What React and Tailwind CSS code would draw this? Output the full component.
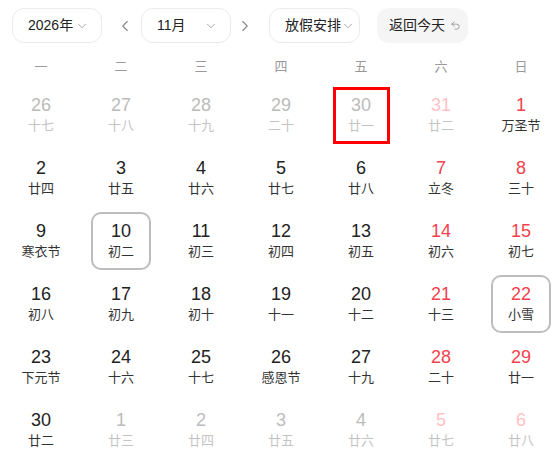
import { ChevronDown, ChevronLeft, ChevronRight, Undo2 } from 'lucide-react';

const weekdays = ['一', '二', '三', '四', '五', '六', '日'];

// kind: 'out' = other month, 'in' = this month; weekend cols get red numbers
const days = [
    ['26', '十七', 'out'], ['27', '十八', 'out'], ['28', '十九', 'out'], ['29', '二十', 'out'], ['30', '廿一', 'out', 'today'], ['31', '廿二', 'out'], ['1', '万圣节', 'in'],
    ['2', '廿四', 'in'], ['3', '廿五', 'in'], ['4', '廿六', 'in'], ['5', '廿七', 'in'], ['6', '廿八', 'in'], ['7', '立冬', 'in'], ['8', '三十', 'in'],
    ['9', '寒衣节', 'in'], ['10', '初二', 'in', 'sel'], ['11', '初三', 'in'], ['12', '初四', 'in'], ['13', '初五', 'in'], ['14', '初六', 'in'], ['15', '初七', 'in'],
    ['16', '初八', 'in'], ['17', '初九', 'in'], ['18', '初十', 'in'], ['19', '十一', 'in'], ['20', '十二', 'in'], ['21', '十三', 'in'], ['22', '小雪', 'in', 'sel'],
    ['23', '下元节', 'in'], ['24', '十六', 'in'], ['25', '十七', 'in'], ['26', '感恩节', 'in'], ['27', '十九', 'in'], ['28', '二十', 'in'], ['29', '廿一', 'in'],
    ['30', '廿二', 'in'], ['1', '廿三', 'out'], ['2', '廿四', 'out'], ['3', '廿五', 'out'], ['4', '廿六', 'out'], ['5', '廿七', 'out'], ['6', '廿八', 'out'],
];

const Select = ({ label, className }) => (
    <div className={`flex items-center justify-between h-[35px] rounded-[12px] border border-[#ebebeb] bg-white text-[14px] text-[#222] ${className}`}>
        <span>{label}</span>
        <ChevronDown size={14} strokeWidth={1.5} className="text-[#999]" />
    </div>
);

const DayCell = ({ day, index }) => {
    const [num, lunar, kind, mark] = day;
    const weekend = index % 7 >= 5;
    let numColor = 'text-[#222]';
    let lunarColor = 'text-[#333]';
    if (kind === 'out') {
        numColor = weekend ? 'text-[#ffc2c4]' : 'text-[#bbbbbb]';
        lunarColor = 'text-[#c4c4c4]';
    } else if (weekend) {
        numColor = 'text-[#f5414d]';
    }
    let box = 'w-[60px] h-[58px] border-2 border-transparent';
    if (mark === 'sel') box = 'w-[60px] h-[58px] border-2 border-[#bdbdbd] rounded-[10px]';
    if (mark === 'today') box = 'w-[57px] h-[57px] border-[3px] border-[#ff0000]';

    return (
        <div className="flex justify-center items-center h-[58px]">
            <div className={`flex flex-col items-center justify-center ${box}`}>
                <span className={`text-[18px] leading-[21px] ${numColor}`}>{num}</span>
                <span className={`text-[13px] leading-[19px] ${lunarColor}`}>{lunar}</span>
            </div>
        </div>
    );
};

export default function App() {
    return (
        <div className="w-[558px] h-[466px] overflow-hidden bg-white font-['Liberation_Sans','Noto_Sans_CJK_SC',sans-serif]">
            <div className="flex items-center pt-[8px]">
                <Select label="2026年" className="ml-[12px] w-[90px] pl-[15px] pr-[12px]" />
                <button className="ml-[11px] w-[24px] flex justify-center text-[#888]">
                    <ChevronLeft size={18} strokeWidth={1.5} />
                </button>
                <Select label="11月" className="ml-[4px] w-[90px] pl-[15px] pr-[12px]" />
                <button className="ml-[2px] w-[24px] flex justify-center text-[#888]">
                    <ChevronRight size={18} strokeWidth={1.5} />
                </button>
                <Select label="放假安排" className="ml-[12px] w-[91px] pl-[15px] pr-[4px]" />
                <button className="ml-[17px] w-[91px] h-[35px] rounded-[12px] bg-[#f5f5f5] flex items-center pl-[12px] gap-[5px] text-[14px] text-[#222]">
                    <span>返回今天</span>
                    <Undo2 size={11} strokeWidth={2} className="text-[#999]" />
                </button>
            </div>

            <div className="grid grid-cols-[repeat(7,80px)] pl-px mt-[14px]">
                {weekdays.map((w) => (
                    <div key={w} className="text-center text-[13px] leading-[20px] text-[#999]">{w}</div>
                ))}
            </div>

            <div className="grid grid-cols-[repeat(7,80px)] gap-y-[5px] pl-px mt-[9px]">
                {days.map((d, i) => (
                    <DayCell key={i} day={d} index={i} />
                ))}
            </div>
        </div>
    );
}
